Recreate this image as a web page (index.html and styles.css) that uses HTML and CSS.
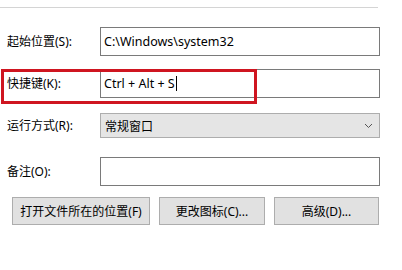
FILE: index.html
```html
<!DOCTYPE html>
<html>
<head>
    <title>快捷方式属性</title>
    <link rel="stylesheet" href="styles.css">
</head>
<body>
    <div class="panel">
        <div class="rule"></div>

        <div class="row row-start">
            <label class="label">起始位置(S):</label>
            <div class="field">C:\Windows\system32</div>
        </div>

        <div class="row row-hotkey">
            <label class="label">快捷键(K):</label>
            <div class="field">Ctrl + Alt + S<span class="caret"></span></div>
            <div class="mark"></div>
        </div>

        <div class="row row-run">
            <label class="label">运行方式(R):</label>
            <div class="field select">
                <span>常规窗口</span>
                <svg class="chevron" width="9" height="6" viewBox="0 0 9 6">
                    <path d="M1 1 L4.5 4.5 L8 1" fill="none" stroke="#555" stroke-width="1"/>
                </svg>
            </div>
        </div>

        <div class="row row-note">
            <label class="label">备注(O):</label>
            <div class="field"></div>
        </div>

        <div class="buttons">
            <button class="btn btn-open">打开文件所在的位置(F)</button>
            <button class="btn btn-icon">更改图标(C)...</button>
            <button class="btn btn-adv">高级(D)...</button>
        </div>
    </div>
</body>
</html>
```

FILE: styles.css
```css
body {
    margin: 0;
    background: #fff;
    font-family: "Noto Sans", "Noto Sans CJK SC", sans-serif;
    font-size: 12px;
    color: #000;
}
.panel {
    display: flex;
    flex-direction: column;
    padding-top: 7px;
}
.rule {
    width: 378px;
    height: 1px;
    background: #d4d4d4;
}
.row {
    position: relative;
    display: grid;
    grid-template-columns: 100px 280px;
    align-items: center;
}
.row-start {
    margin-top: 19px;
}
.row-hotkey {
    margin-top: 13px;
}
.row-run {
    margin-top: 15px;
}
.row-note {
    margin-top: 19px;
}
.label {
    padding-left: 7px;
    line-height: 16px;
}
.field {
    box-sizing: border-box;
    height: 29px;
    border: 1px solid #7a7a7a;
    padding: 0 3px;
    display: flex;
    align-items: center;
    white-space: nowrap;
    font-size: 12.5px;
}
.caret {
    display: inline-block;
    width: 1px;
    height: 15px;
    margin-left: 1px;
    background: #000;
}
.select {
    height: 25px;
    background: #e5e5e5;
    border-color: #adadad;
    justify-content: space-between;
    padding: 0 6px 0 4px;
    font-size: 12px;
}
.chevron {
    display: block;
}
.mark {
    position: absolute;
    left: 1px;
    top: 0;
    width: 256px;
    height: 35px;
    box-sizing: border-box;
    border: 3px solid #cf1520;
}
.buttons {
    display: flex;
    gap: 9px;
    margin-top: 11px;
    padding-left: 12px;
}
.btn {
    box-sizing: border-box;
    height: 28px;
    background: #e1e1e1;
    border: 1px solid #adadad;
    font-family: inherit;
    font-size: 12px;
    color: #000;
    padding: 0;
}
.btn-open {
    width: 138px;
}
.btn-icon {
    width: 106px;
}
.btn-adv {
    width: 105px;
}
```
